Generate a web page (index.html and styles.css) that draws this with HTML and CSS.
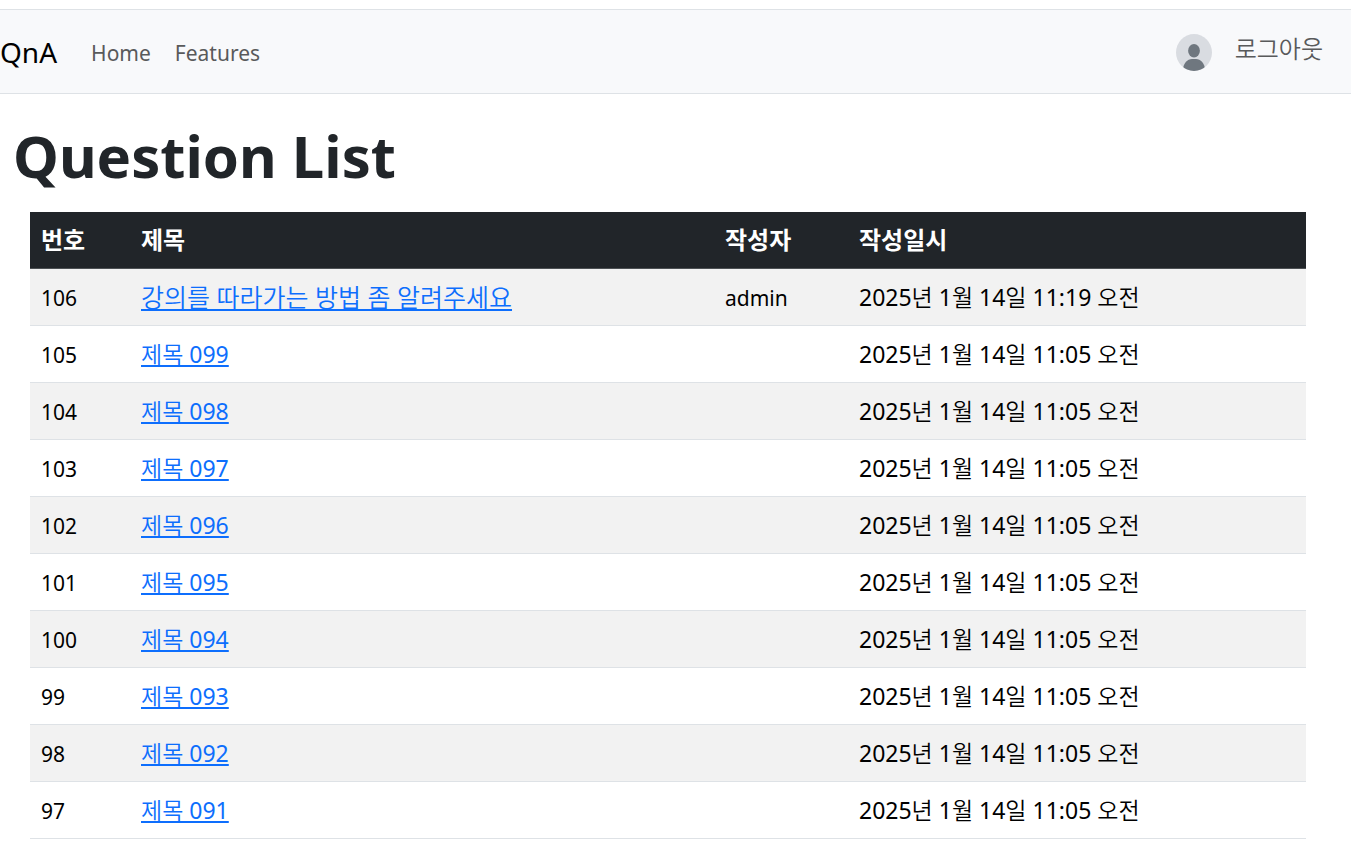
FILE: index.html
```html
<!DOCTYPE html>
<html lang="ko">
<head>
<meta charset="utf-8">
<meta name="viewport" content="width=device-width, initial-scale=1">
<title>QnA</title>
<link rel="stylesheet" href="styles.css">
</head>
<body>
<nav class="navbar">
  <a class="brand" href="#">QnA</a>
  <div class="links">
    <a class="nav-link" href="#">Home</a>
    <a class="nav-link" href="#">Features</a>
  </div>
  <div class="account">
    <svg class="avatar" viewBox="0 0 36 37" aria-hidden="true">
      <defs><clipPath id="disc"><ellipse cx="18" cy="18.5" rx="18" ry="18.5"/></clipPath></defs>
      <g clip-path="url(#disc)">
        <rect width="36" height="37" fill="#d9dce1"/>
        <ellipse cx="18" cy="16.8" rx="5.9" ry="6.7" fill="#6f777f"/>
        <path d="M6.8 37C7 29 11.500 25 16 25h4c4.500 0 9 4 9.200 12z" fill="#6f777f"/>
      </g>
    </svg>
    <a class="nav-link logout" href="#">로그아웃</a>
  </div>
</nav>
<main class="content">
  <h1 class="title">Question List</h1>
  <table class="table">
    <colgroup><col class="col-no"><col class="col-subject"><col class="col-author"><col class="col-date"></colgroup>
    <thead>
      <tr><th scope="col">번호</th><th scope="col">제목</th><th scope="col">작성자</th><th scope="col">작성일시</th></tr>
    </thead>
    <tbody>
      <tr><td class="num">106</td><td class="long"><a href="#">강의를 따라가는 방법 좀 알려주세요</a></td><td class="num">admin</td><td>2025년 1월 14일 11:19 오전</td></tr>
      <tr><td class="num">105</td><td><a href="#">제목 099</a></td><td></td><td>2025년 1월 14일 11:05 오전</td></tr>
      <tr><td class="num">104</td><td><a href="#">제목 098</a></td><td></td><td>2025년 1월 14일 11:05 오전</td></tr>
      <tr><td class="num">103</td><td><a href="#">제목 097</a></td><td></td><td>2025년 1월 14일 11:05 오전</td></tr>
      <tr><td class="num">102</td><td><a href="#">제목 096</a></td><td></td><td>2025년 1월 14일 11:05 오전</td></tr>
      <tr><td class="num">101</td><td><a href="#">제목 095</a></td><td></td><td>2025년 1월 14일 11:05 오전</td></tr>
      <tr><td class="num">100</td><td><a href="#">제목 094</a></td><td></td><td>2025년 1월 14일 11:05 오전</td></tr>
      <tr><td class="num">99</td><td><a href="#">제목 093</a></td><td></td><td>2025년 1월 14일 11:05 오전</td></tr>
      <tr><td class="num">98</td><td><a href="#">제목 092</a></td><td></td><td>2025년 1월 14일 11:05 오전</td></tr>
      <tr><td class="num">97</td><td><a href="#">제목 091</a></td><td></td><td>2025년 1월 14일 11:05 오전</td></tr>
    </tbody>
  </table>
</main>
</body>
</html>
```
FILE: styles.css
```css
* { box-sizing: border-box; }
body {
  margin: 0;
  padding-top: 9px;
  background: #fff;
  color: #212529;
  font-family: "Noto Sans", "Noto Sans CJK KR DemiLight", "Noto Sans CJK KR", sans-serif;
  font-size: 23px;
  line-height: 32px;
}
.navbar {
  display: flex;
  align-items: center;
  gap: 34px;
  padding: 23px 28px 22px 0;
  background: #f8f9fb;
  border-top: 1px solid #dee2e6;
  border-bottom: 1px solid #dee2e6;
}
.brand {
  color: #000;
  font-size: 28px;
  line-height: 38px;
  text-decoration: none;
}
.links { display: flex; gap: 24px; padding-top: 2px; }
.nav-link {
  color: #595a5b;
  font-size: 21px;
  text-decoration: none;
}
.account {
  display: flex;
  align-items: center;
  gap: 23px;
  margin-left: auto;
}
.avatar { width: 36px; height: 37px; }
.logout {
  padding-bottom: 6px;
  font-size: 24px;
}
.content { padding: 22px 45px 0 30px; }
.title {
  margin: 0 0 16px -17px;
  font-size: 58px;
  line-height: 80px;
  font-weight: 700;
}
.table {
  width: 100%;
  table-layout: fixed;
  border-collapse: separate;
  border-spacing: 0;
  color: #000;
}
.col-no { width: 100px; }
.col-author { width: 134px; }
.col-date { width: 458px; }
.table th, .table td {
  height: 57px;
  padding: 12px 11px;
  text-align: left;
  border-bottom: 1px solid #dee2e6;
}
.table th {
  background: #212529;
  border-bottom-color: #4d5154;
  color: #fff;
  font-family: "Noto Sans", "Noto Sans CJK KR", sans-serif;
  font-size: 24px;
  font-weight: 700;
}
.table tbody tr:nth-child(odd) { background: #f2f2f2; }
.table .num { padding-top: 13px; padding-bottom: 11px; font-size: 21px; }
.table .long { font-size: 25px; }
.table a {
  color: #0d6efd;
  text-decoration-thickness: 2px;
  text-underline-offset: 2px;
}
```
